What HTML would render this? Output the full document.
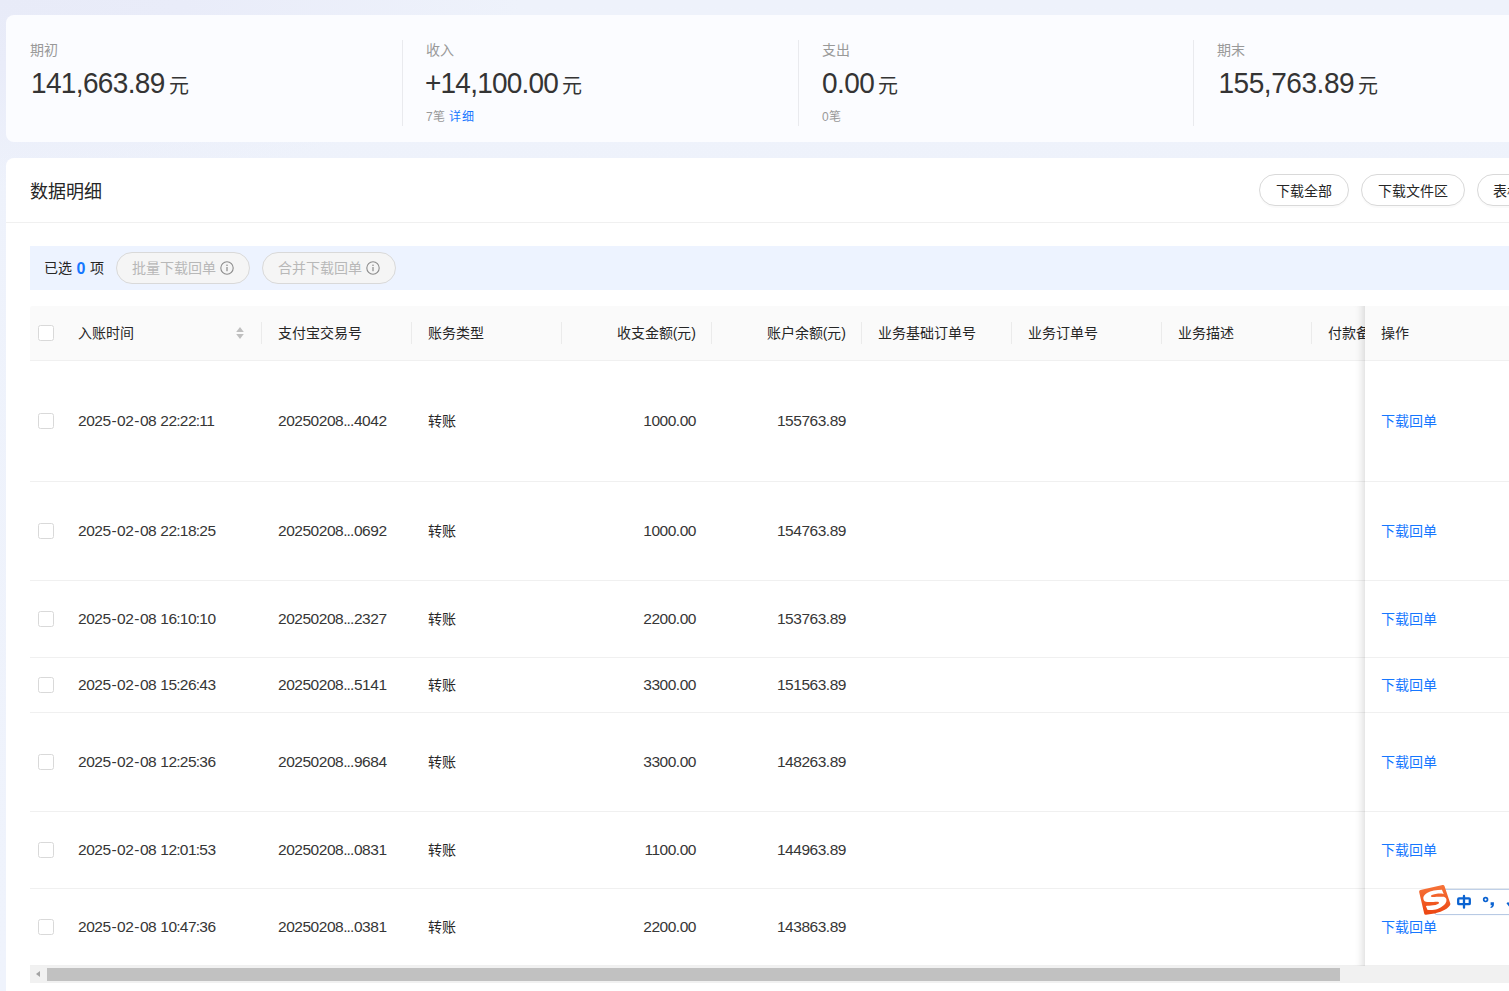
<!DOCTYPE html>
<html lang="zh-CN">
<head>
<meta charset="utf-8">
<title>数据明细</title>
<style>
*{box-sizing:border-box;margin:0;padding:0}
html,body{width:1509px;height:991px;overflow:hidden}
body{font-family:"Liberation Sans",sans-serif;font-size:14px;color:rgba(0,0,0,.88);background:#edf1fa;position:relative}
.bg{position:absolute;left:0;top:0;width:1509px;height:991px;background:radial-gradient(ellipse 520px 190px at 0 0,#e8ebf8 0%,#e9ecf9 35%,rgba(238,242,251,0) 100%),linear-gradient(180deg,#eef2fb 0%,#eff3fc 100%)}
/* summary card */
.sum{position:absolute;left:6px;top:15px;width:1520px;height:127px;background:#fbfcff;border-radius:8px}
.sum .col{position:absolute;top:0;height:127px}
.sum .vline{position:absolute;top:25px;width:1px;height:86px;background:#e9eaee}
.sum .lab{white-space:nowrap;position:absolute;left:0;top:27px;font-size:14px;line-height:16px;color:#999}
.sum .val{position:absolute;left:0;top:49px;font-size:28px;line-height:38px;color:#343434;white-space:nowrap;letter-spacing:-.55px}
.sum .val b{display:inline-block;font-weight:normal;transform:scaleY(1.08);transform-origin:0 47%}
.sum .val i{font-style:normal;font-size:20px;letter-spacing:0;margin-left:4px;position:relative;top:1px}
.sum .sub{position:absolute;left:0;top:94px;letter-spacing:.3px;font-size:12px;line-height:16px;color:#999;white-space:nowrap}
.sum .sub a{color:#1677ff;margin-left:4px}
/* detail card */
.card{position:absolute;left:6px;top:158px;width:1520px;height:860px;background:#fff;border-radius:8px}
.title{position:absolute;left:24px;top:20px;font-size:18px;line-height:28px;color:#262626}
.hr{position:absolute;left:0;top:64px;width:1520px;height:1px;background:#f0f0f0}
.pill{position:absolute;top:16px;height:32px;border:1px solid #d9d9d9;border-radius:16px;background:#fff;font-size:14px;line-height:30px;padding:1px 16px 0;white-space:nowrap;color:#262626;box-shadow:0 2px 0 rgba(0,0,0,.02)}
.selbar{position:absolute;left:24px;top:88px;width:1500px;height:44px;background:#edf3ff}
.selbar .txt{position:absolute;left:14px;top:11px;line-height:22px;font-size:14px;color:#262626;white-space:nowrap}
.selbar .txt b{color:#1677ff;font-size:16px;margin:0 .5px;position:relative;top:.5px}
.dpill{position:absolute;top:6px;height:32px;width:134px;border:1px solid #d9d9d9;border-radius:16px;background:#f5f5f5;color:#b8b8b8;font-size:14px;line-height:30px;padding-left:15px;white-space:nowrap}
.dpill svg{position:absolute;left:103px;top:8px}

.tbl{position:absolute;left:24px;top:148px;width:1500px;height:680px}
.thead{position:absolute;left:0;top:0;width:1500px;height:55px;background:#fafafa;border-bottom:1px solid #f0f0f0;border-radius:3px 0 0 0}
.th{position:absolute;top:16px;line-height:22px;font-size:14px;color:#262626;white-space:nowrap}
.r{text-align:right}
.dv{position:absolute;top:16px;width:1px;height:22px;background:#ebebeb}
.sort{position:absolute;left:206.2px;top:21px}
.cb{position:absolute;width:16px;height:16px;border:1px solid #d9d9d9;border-radius:2.5px;background:#fff}
.tr{position:absolute;left:0;width:1500px;border-bottom:1px solid #f0f0f0;background:#fff}
.td{position:absolute;top:50%;margin-top:-11.5px;line-height:22px;font-size:14px;color:#262626;white-space:nowrap}
.td.n{color:#363636;font-size:15.5px;letter-spacing:-.47px;word-spacing:.3px}
.td.n s{text-decoration:none;margin:0 .9px}
.td.n em{font-style:normal;margin:0 -.35px}
.td.n u{text-decoration:none;letter-spacing:-.9px;margin-right:.5px}
.fix{position:absolute;left:1335px;top:0;width:165px;height:660px;background:#fff}
.fsh{position:absolute;left:1305px;top:0;width:30px;height:660px;box-shadow:inset -10px 0 8px -8px rgba(0,0,0,.15);pointer-events:none}
.fh{position:absolute;left:0;top:0;width:165px;height:55px;background:#fafafa;border-bottom:1px solid #f0f0f0}
.ftr{position:absolute;left:0;width:165px;border-bottom:1px solid #f0f0f0}
.lk{color:#1677ff}
.sb{position:absolute;left:0;top:660px;width:1500px;height:17px;background:#f1f1f1}
.sb .thumb{position:absolute;left:17px;top:2px;width:1293px;height:13px;background:#c1c1c1}
.sb .ar{position:absolute;left:6px;top:5px;width:0;height:0;border-top:3.5px solid transparent;border-bottom:3.5px solid transparent;border-right:4px solid #a3a3a3}
</style>
</head>
<body>
<div class="bg"></div>

<div class="sum">
  <div class="col" style="left:24px"><div class="lab">期初</div><div class="val"><b style="margin-left:1px;letter-spacing:-.65px">141,663.89</b><i>元</i></div></div>
  <div class="vline" style="left:396px"></div>
  <div class="col" style="left:420px"><div class="lab">收入</div><div class="val"><b style="margin-left:-1px;letter-spacing:-.78px">+14,100.00</b><i>元</i></div><div class="sub">7笔<a>详细</a></div></div>
  <div class="vline" style="left:792px"></div>
  <div class="col" style="left:816px"><div class="lab">支出</div><div class="val"><b>0.00</b><i>元</i></div><div class="sub">0笔</div></div>
  <div class="vline" style="left:1187px"></div>
  <div class="col" style="left:1211px"><div class="lab">期末</div><div class="val"><b style="margin-left:1.5px;letter-spacing:-.45px">155,763.89</b><i>元</i></div></div>
</div>

<div class="card">
  <div class="title">数据明细</div>
  <div class="pill" style="left:1253px;width:90px">下载全部</div>
  <div class="pill" style="left:1355px;width:104px">下载文件区</div>
  <div class="pill" style="left:1471px;width:104px;padding-left:14.5px">表格设置</div>
  <div class="hr"></div>
  <div class="selbar">
    <div class="txt">已选 <b>0</b> 项</div>
    <div class="dpill" style="left:86px">批量下载回单<svg width="14" height="14" viewBox="0 0 14 14"><circle cx="7" cy="7" r="6.2" fill="none" stroke="#8c8c8c" stroke-width="1.1"/><rect x="6.4" y="6" width="1.2" height="4.2" fill="#8c8c8c"/><circle cx="7" cy="4.2" r=".8" fill="#8c8c8c"/></svg></div>
    <div class="dpill" style="left:232px">合并下载回单<svg width="14" height="14" viewBox="0 0 14 14"><circle cx="7" cy="7" r="6.2" fill="none" stroke="#8c8c8c" stroke-width="1.1"/><rect x="6.4" y="6" width="1.2" height="4.2" fill="#8c8c8c"/><circle cx="7" cy="4.2" r=".8" fill="#8c8c8c"/></svg></div>
  </div>
  <div class="tbl">
<div class="thead">
<span class="cb" style="left:8px;top:19px"></span>
<span class="th" style="left:48px">入账时间</span>
<span class="th" style="left:248px">支付宝交易号</span>
<span class="th" style="left:398px">账务类型</span>
<span class="th r" style="left:526px;width:140px">收支金额(元)</span>
<span class="th r" style="left:676px;width:140px">账户余额(元)</span>
<span class="th" style="left:848px">业务基础订单号</span>
<span class="th" style="left:998px">业务订单号</span>
<span class="th" style="left:1148px">业务描述</span>
<span class="th" style="left:1298px">付款备注</span>
<i class="dv" style="left:231px"></i>
<i class="dv" style="left:381px"></i>
<i class="dv" style="left:531px"></i>
<i class="dv" style="left:681px"></i>
<i class="dv" style="left:831px"></i>
<i class="dv" style="left:981px"></i>
<i class="dv" style="left:1131px"></i>
<i class="dv" style="left:1281px"></i>
<svg class="sort" width="8" height="12" viewBox="0 0 8 12"><path d="M4 0L7.8 5H.2Z" fill="#bfbfbf"/><path d="M4 12L7.8 7.1H.2Z" fill="#bfbfbf"/></svg>
</div>
<div class="tr" style="top:55px;height:121px"><span class="cb" style="left:8px;top:52px"></span><span class="td n" style="left:48px">2025<s>-</s>02<s>-</s>08 22<em>:</em>22<em>:</em>11</span><span class="td n" style="left:248px">20250208<u>...</u>4042</span><span class="td" style="left:398px">转账</span><span class="td n r" style="left:526px;width:140px">1000.00</span><span class="td n r" style="left:676px;width:140px">155763.89</span></div>
<div class="tr" style="top:176px;height:99px"><span class="cb" style="left:8px;top:41px"></span><span class="td n" style="left:48px">2025<s>-</s>02<s>-</s>08 22<em>:</em>18<em>:</em>25</span><span class="td n" style="left:248px">20250208<u>...</u>0692</span><span class="td" style="left:398px">转账</span><span class="td n r" style="left:526px;width:140px">1000.00</span><span class="td n r" style="left:676px;width:140px">154763.89</span></div>
<div class="tr" style="top:275px;height:77px"><span class="cb" style="left:8px;top:30px"></span><span class="td n" style="left:48px">2025<s>-</s>02<s>-</s>08 16<em>:</em>10<em>:</em>10</span><span class="td n" style="left:248px">20250208<u>...</u>2327</span><span class="td" style="left:398px">转账</span><span class="td n r" style="left:526px;width:140px">2200.00</span><span class="td n r" style="left:676px;width:140px">153763.89</span></div>
<div class="tr" style="top:352px;height:55px"><span class="cb" style="left:8px;top:19px"></span><span class="td n" style="left:48px">2025<s>-</s>02<s>-</s>08 15<em>:</em>26<em>:</em>43</span><span class="td n" style="left:248px">20250208<u>...</u>5141</span><span class="td" style="left:398px">转账</span><span class="td n r" style="left:526px;width:140px">3300.00</span><span class="td n r" style="left:676px;width:140px">151563.89</span></div>
<div class="tr" style="top:407px;height:99px"><span class="cb" style="left:8px;top:41px"></span><span class="td n" style="left:48px">2025<s>-</s>02<s>-</s>08 12<em>:</em>25<em>:</em>36</span><span class="td n" style="left:248px">20250208<u>...</u>9684</span><span class="td" style="left:398px">转账</span><span class="td n r" style="left:526px;width:140px">3300.00</span><span class="td n r" style="left:676px;width:140px">148263.89</span></div>
<div class="tr" style="top:506px;height:77px"><span class="cb" style="left:8px;top:30px"></span><span class="td n" style="left:48px">2025<s>-</s>02<s>-</s>08 12<em>:</em>01<em>:</em>53</span><span class="td n" style="left:248px">20250208<u>...</u>0831</span><span class="td" style="left:398px">转账</span><span class="td n r" style="left:526px;width:140px">1100.00</span><span class="td n r" style="left:676px;width:140px">144963.89</span></div>
<div class="tr" style="top:583px;height:77px"><span class="cb" style="left:8px;top:30px"></span><span class="td n" style="left:48px">2025<s>-</s>02<s>-</s>08 10<em>:</em>47<em>:</em>36</span><span class="td n" style="left:248px">20250208<u>...</u>0381</span><span class="td" style="left:398px">转账</span><span class="td n r" style="left:526px;width:140px">2200.00</span><span class="td n r" style="left:676px;width:140px">143863.89</span></div>
<div class="fsh"></div>
<div class="fix">
<div class="fh"><span class="th" style="left:16px">操作</span></div>
<div class="ftr" style="top:55px;height:121px"><span class="td lk" style="left:16px">下载回单</span></div>
<div class="ftr" style="top:176px;height:99px"><span class="td lk" style="left:16px">下载回单</span></div>
<div class="ftr" style="top:275px;height:77px"><span class="td lk" style="left:16px">下载回单</span></div>
<div class="ftr" style="top:352px;height:55px"><span class="td lk" style="left:16px">下载回单</span></div>
<div class="ftr" style="top:407px;height:99px"><span class="td lk" style="left:16px">下载回单</span></div>
<div class="ftr" style="top:506px;height:77px"><span class="td lk" style="left:16px">下载回单</span></div>
<div class="ftr" style="top:583px;height:77px"><span class="td lk" style="left:16px">下载回单</span></div>
</div>
<div class="sb"><i class="ar"></i><i class="thumb"></i></div>
</div>
</div>
<svg class="ime" width="100" height="50" viewBox="0 0 100 50" style="position:absolute;left:1409px;top:876px">
<defs><linearGradient id="sg" gradientUnits="userSpaceOnUse" x1="0" y1="80" x2="0" y2="900"><stop offset="0" stop-color="#f6743a"/><stop offset="1" stop-color="#ec4511"/></linearGradient></defs>
<rect x="25.5" y="13.3" width="80" height="25.3" rx="2.5" fill="#fff" stroke="#b1c5e2" stroke-width="1"/>
<g transform="translate(6 6) scale(.036364)">
<path d="M158 262 L768 126 L928 605 C905 680 720 775 570 812 L296 858 Z" fill="url(#sg)" stroke="url(#sg)" stroke-width="90" stroke-linejoin="round"/>
<path d="M740,215 C600,215 430,250 330,300 C250,345 210,420 235,480 C250,520 280,540 300,545 C400,560 520,545 600,543 C640,543 665,555 660,575 C650,600 600,625 500,640 C430,652 350,655 300,660 L340,760 C400,780 520,775 620,740 C740,695 830,620 860,540 C880,470 850,425 795,408 C700,395 580,408 500,410 C460,410 430,400 437,382 C445,360 500,335 600,322 C680,315 740,322 790,328 Z" fill="#fff"/>
</g>
<g fill="none" stroke="#0b63d1" stroke-width="2.3">
<rect x="49.2" y="22.4" width="11.6" height="5.8" rx=".8"/>
<path d="M55 20v11.7" stroke-linecap="round"/>
<circle cx="76.6" cy="23.6" r="1.9" stroke-width="1.7"/>
</g>
<path d="M81.6 26.2h3.3v2.6c0 1.6-1.3 3-3.4 3.3v-1.2c.9-.3 1.4-.9 1.4-1.6h-1.3z" fill="#0b63d1"/>
<path d="M98.3 26.6l2.6 3.2 3-3.6" fill="none" stroke="#0b63d1" stroke-width="2.2"/>
</svg>
</body>
</html>
